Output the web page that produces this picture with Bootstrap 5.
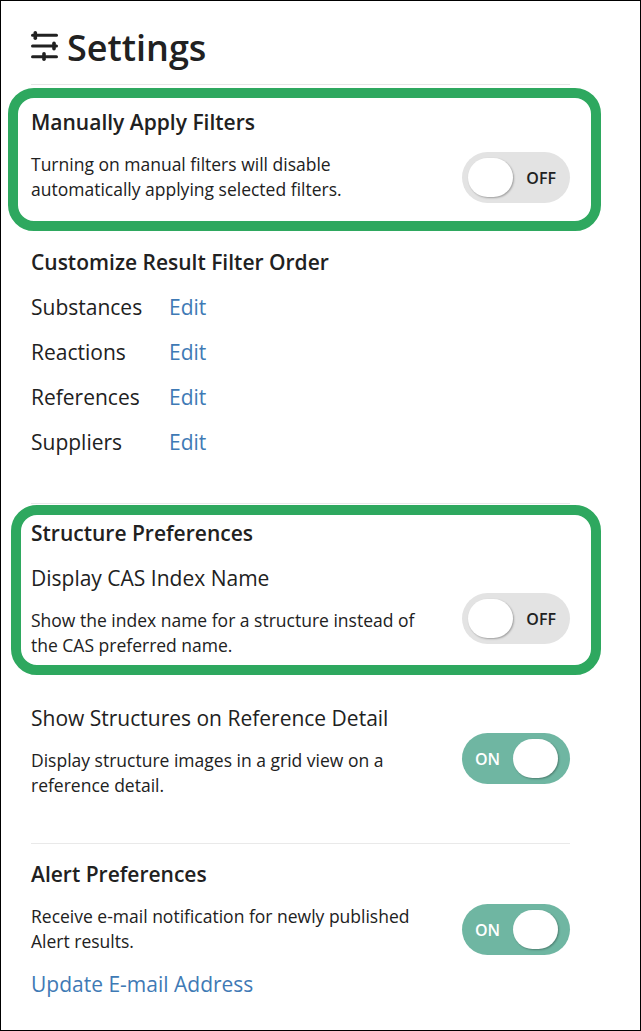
<!DOCTYPE html>
<html lang="en">
<head>
<meta charset="utf-8">
<title>Settings</title>
<link href="https://cdn.jsdelivr.net/npm/bootstrap@5.3.0/dist/css/bootstrap.min.css" rel="stylesheet">
<style>
body{font-family:"Open Sans",sans-serif;color:#212121;background:#fff;margin:0;}
.frame{position:relative;width:641px;height:1031px;border:1px solid #000;padding:0 70px 0 30px;overflow:hidden;}
.title-row{height:84px;padding-top:24px;gap:6px;border-bottom:1px solid #e6e6e6;}
.title-row h1{font-size:36px;line-height:46px;font-weight:600;margin:0;}
.title-row svg{margin-top:5px;flex:none;}
.sect-head{font-size:21px;line-height:28px;font-weight:600;margin:0;}
.desc{font-size:17.5px;line-height:25px;margin:16px 0 0;white-space:nowrap;}
.lbl{font-size:21px;line-height:28px;margin:0;}
.edit-link,.mail-link{font-size:21px;line-height:28px;color:#3f7ab5;text-decoration:none;}
.filter-row{height:45px;}
.filter-row .lbl{width:138px;}
.sep{border-top:1px solid #e9e9e9;}
.sw{position:relative;flex:none;width:108px;height:51px;border-radius:26px;font-size:16px;font-weight:600;display:flex;align-items:center;}
.sw-off{background:#e3e3e3;color:#212121;justify-content:flex-end;padding-right:14px;}
.sw-on{background:#6fb6a2;color:#fff;padding-left:13px;}
.knob{position:absolute;top:6px;width:45px;height:39px;background:#fff;border-radius:20px;box-shadow:1px 1px 2px rgba(0,0,0,.3);}
.sw-off .knob{left:6px;}
.sw-on .knob{right:12px;}
.callout{position:absolute;border:10px solid #2ea85f;border-radius:26px;pointer-events:none;}
.callout-a{left:7px;top:87px;width:593px;height:143px;}
.callout-b{left:10px;top:504px;width:590px;height:170px;}
.sec-manual{padding-top:23px;}
.sec-manual .sw{margin-top:44px;}
.sec-order{margin-top:45px;}
.sec-order .sect-head{margin-bottom:8px;}
.sep-a{margin-top:39px;}
.sec-struct{padding-top:15px;}
.opt{display:flex;justify-content:space-between;align-items:flex-start;}
.opt .sw{margin-top:29px;}
.opt-first{margin-top:17px;}
.opt-next{margin-top:46px;}
.sep-b{margin-top:45px;}
.sec-alert{padding-top:16px;}
.sec-alert .sw{margin-top:16px;}
.mail-link{margin-top:15px;}
</style>
</head>
<body>
<div class="frame">
  <div class="title-row d-flex align-items-start">
    <svg width="30" height="32" viewBox="0 0 30 32" aria-hidden="true" fill="#212121">
      <rect x="0" y="3.8" width="27" height="3" rx="1.5"/><rect x="0" y="14.5" width="27" height="3" rx="1.5"/><rect x="0" y="25.2" width="27" height="3" rx="1.5"/>
      <rect x="2.5" y="1" width="3.6" height="9" rx="1.8"/><rect x="21.2" y="11.5" width="3.6" height="9" rx="1.8"/><rect x="11.2" y="22" width="3.6" height="9" rx="1.8"/>
    </svg>
    <h1>Settings</h1>
  </div>

  <section class="sec-manual d-flex justify-content-between align-items-start">
    <div>
      <h2 class="sect-head">Manually Apply Filters</h2>
      <p class="desc">Turning on manual filters will disable<br>automatically applying selected filters.</p>
    </div>
    <div class="sw sw-off"><span class="knob"></span>OFF</div>
  </section>

  <section class="sec-order">
    <h2 class="sect-head">Customize Result Filter Order</h2>
    <div class="filter-row d-flex align-items-center"><p class="lbl">Substances</p><a class="edit-link" href="#">Edit</a></div>
    <div class="filter-row d-flex align-items-center"><p class="lbl">Reactions</p><a class="edit-link" href="#">Edit</a></div>
    <div class="filter-row d-flex align-items-center"><p class="lbl">References</p><a class="edit-link" href="#">Edit</a></div>
    <div class="filter-row d-flex align-items-center"><p class="lbl">Suppliers</p><a class="edit-link" href="#">Edit</a></div>
  </section>

  <div class="sep sep-a"></div>

  <section class="sec-struct">
    <h2 class="sect-head">Structure Preferences</h2>
    <div class="opt opt-first">
      <div>
        <p class="lbl">Display CAS Index Name</p>
        <p class="desc">Show the index name for a structure instead of<br>the CAS preferred name.</p>
      </div>
      <div class="sw sw-off"><span class="knob"></span>OFF</div>
    </div>
    <div class="opt opt-next">
      <div>
        <p class="lbl">Show Structures on Reference Detail</p>
        <p class="desc">Display structure images in a grid view on a<br>reference detail.</p>
      </div>
      <div class="sw sw-on">ON<span class="knob"></span></div>
    </div>
  </section>

  <div class="sep sep-b"></div>

  <section class="sec-alert">
    <h2 class="sect-head">Alert Preferences</h2>
    <div class="d-flex justify-content-between align-items-start">
      <p class="desc">Receive e-mail notification for newly published<br>Alert results.</p>
      <div class="sw sw-on">ON<span class="knob"></span></div>
    </div>
    <a class="mail-link d-block" href="#">Update E-mail Address</a>
  </section>

  <div class="callout callout-a"></div>
  <div class="callout callout-b"></div>
</div>
</body>
</html>
